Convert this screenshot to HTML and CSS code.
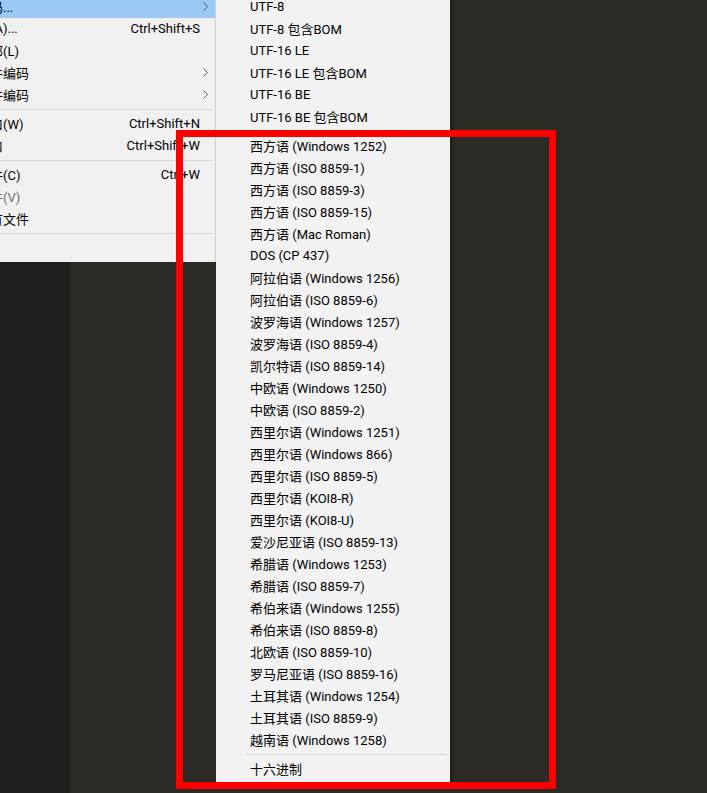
FILE: index.html
```html
<!DOCTYPE html>
<html lang="zh-CN">
<head>
    <meta charset="UTF-8" />
    <meta name="viewport" content="width=device-width, initial-scale=1" />
    <title>重新用编码打开</title>
    <link rel="stylesheet" href="styles.css">
</head>
<body>
    <div class="screen">
        <div class="gutter"></div>
        <div class="editor"></div>

        <div class="menu file-menu">
            <div class="item active">
                <span class="label">码...</span>
                <span class="arrow"><svg width="5" height="9" viewBox="0 0 5 9"><path d="M0.5 0.5 L4.5 4.5 L0.5 8.5" fill="none" stroke="#555" stroke-width="1"/></svg></span>
            </div>
            <div class="item">
                <span class="label">(A)...</span>
                <span class="shortcut">Ctrl+Shift+S</span>
                <span class="arrow"></span>
            </div>
            <div class="item">
                <span class="label">部(L)</span>
                <span class="arrow"></span>
            </div>
            <div class="item">
                <span class="label">件编码</span>
                <span class="arrow"><svg width="5" height="9" viewBox="0 0 5 9"><path d="M0.5 0.5 L4.5 4.5 L0.5 8.5" fill="none" stroke="#555" stroke-width="1"/></svg></span>
            </div>
            <div class="item">
                <span class="label">件编码</span>
                <span class="arrow"><svg width="5" height="9" viewBox="0 0 5 9"><path d="M0.5 0.5 L4.5 4.5 L0.5 8.5" fill="none" stroke="#555" stroke-width="1"/></svg></span>
            </div>
            <div class="separator"></div>
            <div class="item">
                <span class="label">口(W)</span>
                <span class="shortcut">Ctrl+Shift+N</span>
                <span class="arrow"></span>
            </div>
            <div class="item">
                <span class="label">口</span>
                <span class="shortcut">Ctrl+Shift+W</span>
                <span class="arrow"></span>
            </div>
            <div class="separator"></div>
            <div class="item">
                <span class="label">件(C)</span>
                <span class="shortcut">Ctrl+W</span>
                <span class="arrow"></span>
            </div>
            <div class="item disabled">
                <span class="label">件(V)</span>
                <span class="arrow"></span>
            </div>
            <div class="item">
                <span class="label">有文件</span>
                <span class="arrow"></span>
            </div>
            <div class="separator"></div>
            <div class="item tall"></div>
        </div>

        <div class="menu encoding-menu">
            <div class="item">UTF-8</div>
            <div class="item">UTF-8 包含BOM</div>
            <div class="item">UTF-16 LE</div>
            <div class="item">UTF-16 LE 包含BOM</div>
            <div class="item">UTF-16 BE</div>
            <div class="item">UTF-16 BE 包含BOM</div>
            <div class="separator"></div>
            <div class="item">西方语 (Windows 1252)</div>
            <div class="item">西方语 (ISO 8859-1)</div>
            <div class="item">西方语 (ISO 8859-3)</div>
            <div class="item">西方语 (ISO 8859-15)</div>
            <div class="item">西方语 (Mac Roman)</div>
            <div class="item">DOS (CP 437)</div>
            <div class="item">阿拉伯语 (Windows 1256)</div>
            <div class="item">阿拉伯语 (ISO 8859-6)</div>
            <div class="item">波罗海语 (Windows 1257)</div>
            <div class="item">波罗海语 (ISO 8859-4)</div>
            <div class="item">凯尔特语 (ISO 8859-14)</div>
            <div class="item">中欧语 (Windows 1250)</div>
            <div class="item">中欧语 (ISO 8859-2)</div>
            <div class="item">西里尔语 (Windows 1251)</div>
            <div class="item">西里尔语 (Windows 866)</div>
            <div class="item">西里尔语 (ISO 8859-5)</div>
            <div class="item">西里尔语 (KOI8-R)</div>
            <div class="item">西里尔语 (KOI8-U)</div>
            <div class="item">爱沙尼亚语 (ISO 8859-13)</div>
            <div class="item">希腊语 (Windows 1253)</div>
            <div class="item">希腊语 (ISO 8859-7)</div>
            <div class="item">希伯来语 (Windows 1255)</div>
            <div class="item">希伯来语 (ISO 8859-8)</div>
            <div class="item">北欧语 (ISO 8859-10)</div>
            <div class="item">罗马尼亚语 (ISO 8859-16)</div>
            <div class="item">土耳其语 (Windows 1254)</div>
            <div class="item">土耳其语 (ISO 8859-9)</div>
            <div class="item">越南语 (Windows 1258)</div>
            <div class="separator"></div>
            <div class="item">十六进制</div>
        </div>

        <div class="highlight-box"></div>
    </div>
</body>
</html>
```

FILE: styles.css
```css
* {
    margin: 0;
    padding: 0;
    box-sizing: border-box;
}
body {
    font-family: Roboto, 'Noto Sans CJK SC', sans-serif;
    font-size: 13px;
    color: #000;
    background: #2b2a25;
    overflow: hidden;
}
.screen {
    position: relative;
    display: flex;
    width: 707px;
    height: 793px;
    overflow: hidden;
}
.gutter {
    width: 70px;
    background: #1e1e1c;
}
.editor {
    flex: 1;
    background: #2b2a25;
}

/* menus */
.menu {
    position: absolute;
    top: -4px;
    background: #f0f0f0;
}
.item {
    display: flex;
    align-items: center;
    height: 22px;
    padding-bottom: 1px;
    white-space: nowrap;
}
.separator {
    height: 1px;
    background: #d5d5d5;
    margin: 3px 0;
}

.file-menu {
    left: 0;
    width: 216px;
    border-right: 1px solid #cfcfcf;
}
.file-menu .label {
    flex: 1;
    margin-left: -10px;
}
.file-menu .shortcut {
    text-align: right;
}
.file-menu .arrow {
    width: 15px;
    display: flex;
    align-items: center;
    padding-left: 3px;
}
.file-menu .active {
    background: #99c9f4;
}
.file-menu .disabled {
    color: #6d6d6d;
}
.file-menu .separator {
    margin-right: 2px;
}
.file-menu .tall {
    height: 25px;
}

.encoding-menu {
    left: 216px;
    width: 234px;
    background: #f2f2f2;
    padding-bottom: 3px;
    box-shadow: 2px 2px 2px rgba(0, 0, 0, 0.35);
}
.encoding-menu .item {
    padding-left: 34px;
}
.encoding-menu .separator {
    margin: 3px 3px 3px 30px;
}

.highlight-box {
    position: absolute;
    left: 176px;
    top: 130px;
    width: 380px;
    height: 659px;
    border: 7px solid #f00;
}
```
